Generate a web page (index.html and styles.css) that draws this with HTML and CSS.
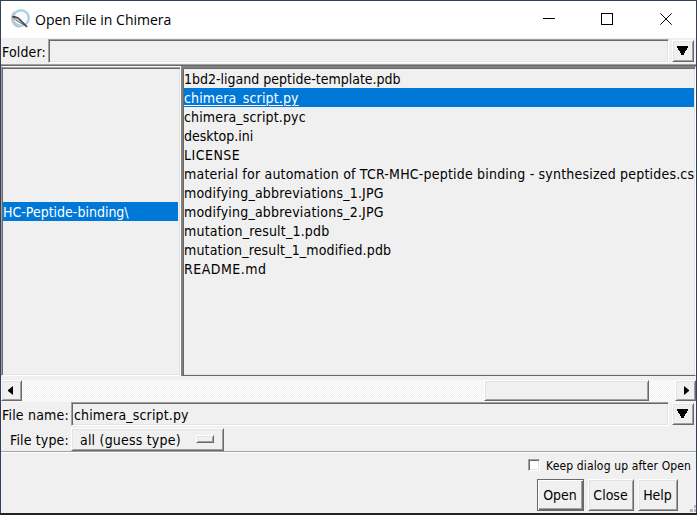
FILE: index.html
```html
<!DOCTYPE html>
<html lang="en">
<head>
<meta charset="utf-8">
<title>Open File in Chimera</title>
<link rel="stylesheet" href="styles.css">
</head>
<body>
<div class="window">
  <header class="titlebar">
    <svg class="logo" width="22" height="22" viewBox="0 0 22 22">
      <circle cx="12" cy="10" r="7.800" fill="#f4fafd" stroke="#a9d2e8" stroke-width="2.400"/>
      <path d="M5.500 4A9 9 0 0 0 5 16Q7 18.500 11 19" fill="none" stroke="#c3c3c3" stroke-width="2.200"/>
      <path d="M3.500 8.500Q7 8 10.500 11L18 18.500L10 14Q6 12 3.500 8.500Z" fill="#ddd" stroke="#666" stroke-width="1"/>
      <path d="M3.500 8.500L9 10L18 19" fill="none" stroke="#444" stroke-width="1.400"/>
    </svg>
    <h1 class="title"><span>Open File in Chimera</span></h1>
    <svg class="controls" width="140" height="20" viewBox="0 0 140 20" fill="none" stroke="#000" stroke-width="1">
      <path d="M3 9.500H15"/>
      <rect x="61.500" y="4.500" width="11" height="11"/>
      <path d="M120.300 4.300L131.700 15.700M131.700 4.300L120.300 15.700"/>
    </svg>
  </header>
  <div class="row folder-row">
    <label class="label track-1">Folder:</label>
    <div class="field sunken"></div>
    <button class="drop raised"><svg width="11" height="9" viewBox="0 0 11 9" shape-rendering="crispEdges"><path d="M0 0H11V1L6.500 9H4.500L0 1Z"/></svg></button>
  </div>
  <div class="panes">
    <div class="pane dirs"><div class="item selected">HC-Peptide-binding\</div></div>
    <div class="pane files">
      <div class="item"><span>1bd2-ligand peptide-template.pdb</span></div>
      <div class="item selected"><span class="active track-1">chimera_script.py</span></div>
      <div class="item"><span class="track-1">chimera_script.pyc</span></div>
      <div class="item"><span>desktop.ini</span></div>
      <div class="item"><span class="track-3">LICENSE</span></div>
      <div class="item"><span class="track-2">material for automation of TCR-MHC-peptide binding - synthesized peptides.csv</span></div>
      <div class="item"><span class="track-2">modifying_abbreviations_1.JPG</span></div>
      <div class="item"><span class="track-2">modifying_abbreviations_2.JPG</span></div>
      <div class="item"><span class="track-2">mutation_result_1.pdb</span></div>
      <div class="item"><span class="track-1">mutation_result_1_modified.pdb</span></div>
      <div class="item"><span class="track-3">README.md</span></div>
    </div>
  </div>
  <div class="scrollbar">
    <button class="step left raised"><svg width="5" height="9" viewBox="0 0 5 9"><path d="M5 0V9L0 5V4Z"/></svg></button>
    <div class="thumb raised"></div>
    <button class="step right raised"><svg width="5" height="9" viewBox="0 0 5 9"><path d="M0 0V9L5 5V4Z"/></svg></button>
  </div>
  <div class="row name-row">
    <label class="label track-2">File name:</label>
    <div class="field sunken"><span class="track-1">chimera_script.py</span></div>
    <button class="drop raised"><svg width="11" height="9" viewBox="0 0 11 9" shape-rendering="crispEdges"><path d="M0 0H11V1L6.500 9H4.500L0 1Z"/></svg></button>
  </div>
  <div class="row type-row">
    <label class="label track-1">File type:</label>
    <button class="menu raised"><span class="track-2">all (guess type)</span><i class="indicator raised"></i></button>
  </div>
  <footer class="footer">
    <label class="keep"><i class="check sunken"></i><span class="track-1">Keep dialog up after Open</span></label>
    <div class="actions">
      <button class="action raised default"><span>Open</span></button>
      <button class="action raised close"><span>Close</span></button>
      <button class="action raised help"><span>Help</span></button>
    </div>
    <svg class="grip" width="11" height="11" viewBox="0 0 11 11" fill="#b8b8b8"><path d="M8 0h3v3H8zM4 4h3v3H4zM8 4h3v3H8zM0 8h3v3H0zM4 8h3v3H4zM8 8h3v3H8z"/></svg>
  </footer>
</div>
</body>
</html>
```
FILE: styles.css
```css
* { box-sizing: border-box; }
body {
  margin: 0;
  background: #222;
  color: #000;
  font: 14px/19px "DejaVu Sans Condensed", "DejaVu Sans", sans-serif;
  font-stretch: condensed;
}
button { margin: 0; padding: 0; font: inherit; color: inherit; background: #f0f0f0; border-radius: 0; }
.window {
  width: 697px;
  height: 514px;
  border: 1px solid #2f4358;
  border-bottom-color: #222;
  background: #f0f0f0;
  display: flex;
  flex-direction: column;
  overflow: hidden;
  white-space: nowrap;
}
.track-1 { letter-spacing: 0.15px; }
.track-2 { letter-spacing: 0.2px; }
.track-3 { letter-spacing: 0.48px; }

.titlebar { height: 37px; flex: none; background: #fff; display: flex; }
.logo { margin: 7px 0 0 8px; }
.title { margin: 9px auto 0 4px; font: 400 14px/20px "Open Sans", "Noto Sans", sans-serif; }
.controls { margin: 8px 16px 0 0; }

.raised {
  border: 1px solid;
  border-color: #fff #696969 #696969 #fff;
  box-shadow: inset 1px 1px #e3e3e3, inset -1px -1px #a0a0a0;
}
.sunken {
  border: 1px solid;
  border-color: #a0a0a0 #fff #fff #a0a0a0;
  box-shadow: inset 1px 1px #696969, inset -1px -1px #e3e3e3;
}
.row { display: flex; flex: none; }
.label { flex: none; padding-left: 1px; }
.folder-row { height: 26px; padding-top: 1px; }
.folder-row .label { width: 47px; padding-top: 4px; }
.field { width: 621px; height: 24px; }
.drop { width: 22px; height: 22px; margin: 1px 0 0 3px; padding: 0 2px 1px 0; display: grid; place-items: center; }

.panes { height: 312px; flex: none; display: flex; border-top: 1px solid #a0a0a0; box-shadow: inset 0 2px #696969; padding-top: 1px; }
.pane { height: 310px; border: 1px solid; border-color: #a0a0a0 #fff #fff #a0a0a0; box-shadow: inset 1px 1px #696969, inset -1px -1px #e3e3e3; overflow: hidden; }
.dirs { width: 180px; border-top: 1px solid #fff; box-shadow: inset 1px 0 #696969, inset 0 1px #a0a0a0, inset 0 2px #696969, inset -1px -1px #e3e3e3; padding: 135px 2px 0 1px; }
.files { width: 515px; border-top: 2px solid #808080; border-bottom-color: #696969; border-left: 2px solid #808080; padding: 1px 1px 0 1px; }
.item { height: 19px; line-height: 21px; overflow: hidden; }
.selected { background: #0078d7; color: #fff; }
.active { text-decoration: underline; text-underline-offset: 2px; text-decoration-thickness: 1px; }

.scrollbar {
  height: 22px;
  margin-top: 4px;
  flex: none;
  display: flex;
  background: repeating-conic-gradient(#fff 0 25%, #f0f0f0 0 50%) 0 0 / 2px 2px;
}
.step { width: 21px; height: 21px; display: grid; place-items: center; }
.left { padding-right: 3px; }
.right { padding-left: 2px; }
.thumb { width: 165px; height: 21px; margin: 0 26px 0 462px; background: #f0f0f0; }

.name-row { height: 26px; }
.name-row .label { width: 70px; padding-top: 4px; }
.name-row .field { width: 598px; padding: 3px 0 0 2px; }
.type-row { height: 24px; border-bottom: 1px solid #a0a0a0; }
.type-row .label { width: 70px; padding: 3px 0 0 9px; }
.menu { width: 153px; height: 23px; display: flex; align-items: center; padding-left: 8px; }
.menu span { padding-top: 1px; }
.indicator { width: 18px; height: 8px; margin: 0 9px 1px auto; }

.footer { flex: 1; position: relative; border-top: 1px solid #fff; }
.keep { display: flex; margin: 6px 0 0 527px; font-size: 12px; line-height: 15px; }
.check { width: 12px; height: 12px; margin: 0 6px 0 0; background: #fff; }
.actions { display: flex; gap: 4px; margin: 5px 0 0 536px; }
.action { height: 32px; width: 46px; text-align: center; padding: 1px 1px 0 0; }
.default { width: 47px; border-color: #696969; box-shadow: inset 1px 1px #fff, inset -1px -1px #696969, inset -2px -2px #a0a0a0; }
.help { width: 40px; }
.grip { position: absolute; right: -1px; bottom: -3px; }
```
